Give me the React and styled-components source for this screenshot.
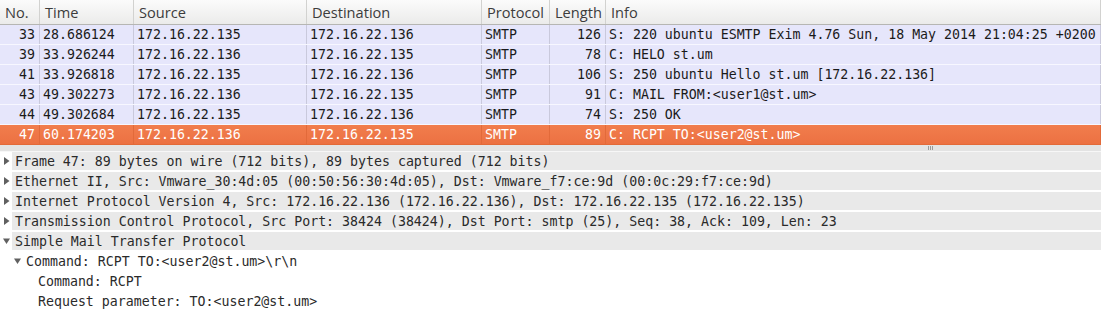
import React from 'react'
import styled, { createGlobalStyle } from 'styled-components'

const GlobalStyle = createGlobalStyle`
  html, body {
    margin: 0;
    padding: 0;
    background: #ffffff;
    overflow: hidden;
  }
`

const cols = '40px 94px 173px 175px 68px 56px 1fr'

const Window = styled.div`
  width: 1101px;
  height: 315px;
  display: flex;
  flex-direction: column;
  background: #ffffff;
`

const PacketList = styled.div`
  display: flex;
  flex-direction: column;
`

const HeaderRow = styled.div`
  display: grid;
  grid-template-columns: ${cols};
  height: 24px;
  background: linear-gradient(#fbfbfb, #ebebea);
  border-bottom: 1px solid #b6b6b3;
`

const HeaderCell = styled.div`
  display: flex;
  align-items: center;
  padding-left: 5px;
  font-family: 'Open Sans', 'DejaVu Sans', sans-serif;
  font-size: 14.6px;
  color: #3c3c3c;
  border-right: 1px solid #d2d2d0;
  white-space: nowrap;
  overflow: hidden;
`

const Row = styled.div`
  display: grid;
  grid-template-columns: ${cols};
  height: 19px;
  border-bottom: 1px solid ${p => (p.$selected ? '#e36a38' : '#f7f7ff')};
  background: ${p => (p.$selected ? 'linear-gradient(#f17d4d, #ec7142)' : '#e6e6fb')};
  color: ${p => (p.$selected ? '#ffffff' : '#1a1a1a')};
`

const Cell = styled.div`
  display: flex;
  align-items: center;
  justify-content: ${p => (p.$right ? 'flex-end' : 'flex-start')};
  padding: 0 4px 0 3px;
  font-family: 'DejaVu Sans Mono', monospace;
  font-size: 13.25px;
  white-space: pre;
  overflow: hidden;
  border-right: 1px solid ${p => (p.$selected ? '#e26a3a' : '#c9c9dc')};
`

const Splitter = styled.div`
  height: 6px;
  background: #e3e3e3;
  border-bottom: 1px solid #f7f7f7;
  display: flex;
  justify-content: flex-end;
  align-items: center;
  padding-right: 168px;
`

const Grip = styled.div`
  display: flex;
  gap: 1px;
  span {
    width: 1px;
    height: 4px;
    background: #9a9a9a;
  }
`

const Details = styled.div`
  display: flex;
  flex-direction: column;
`

const TreeRow = styled.div`
  display: flex;
  align-items: center;
  height: 18px;
  margin-bottom: 2px;
  padding-left: ${p => p.$indent}px;
`

const Expander = styled.div`
  width: 12px;
  flex: none;
  display: flex;
  align-items: center;
  justify-content: center;
`

const TreeText = styled.div`
  flex: 1;
  height: 100%;
  display: flex;
  align-items: center;
  padding-left: 3px;
  background: ${p => (p.$shaded ? '#e9e9e9' : 'transparent')};
  font-family: 'DejaVu Sans Mono', monospace;
  font-size: 13.25px;
  color: #2a2a2a;
  white-space: pre;
`

const Arrow = ({ open }) => (
  <svg width="7" height="8" viewBox="0 0 7 8">
    {open ? <path d="M0 1.5 L7 1.5 L3.5 7 Z" fill="#606060" /> : <path d="M1 0 L6.5 4 L1 8 Z" fill="#606060" />}
  </svg>
)

const packets = [
  ['33', '28.686124', '172.16.22.135', '172.16.22.136', 'SMTP', '126', 'S: 220 ubuntu ESMTP Exim 4.76 Sun, 18 May 2014 21:04:25 +0200'],
  ['39', '33.926244', '172.16.22.136', '172.16.22.135', 'SMTP', '78', 'C: HELO st.um'],
  ['41', '33.926818', '172.16.22.135', '172.16.22.136', 'SMTP', '106', 'S: 250 ubuntu Hello st.um [172.16.22.136]'],
  ['43', '49.302273', '172.16.22.136', '172.16.22.135', 'SMTP', '91', 'C: MAIL FROM:<user1@st.um>'],
  ['44', '49.302684', '172.16.22.135', '172.16.22.136', 'SMTP', '74', 'S: 250 OK'],
  ['47', '60.174203', '172.16.22.136', '172.16.22.135', 'SMTP', '89', 'C: RCPT TO:<user2@st.um>'],
]

const tree = [
  { text: 'Frame 47: 89 bytes on wire (712 bits), 89 bytes captured (712 bits)', indent: 0, arrow: 'closed', shaded: true },
  { text: 'Ethernet II, Src: Vmware_30:4d:05 (00:50:56:30:4d:05), Dst: Vmware_f7:ce:9d (00:0c:29:f7:ce:9d)', indent: 0, arrow: 'closed', shaded: true },
  { text: 'Internet Protocol Version 4, Src: 172.16.22.136 (172.16.22.136), Dst: 172.16.22.135 (172.16.22.135)', indent: 0, arrow: 'closed', shaded: true },
  { text: 'Transmission Control Protocol, Src Port: 38424 (38424), Dst Port: smtp (25), Seq: 38, Ack: 109, Len: 23', indent: 0, arrow: 'closed', shaded: true },
  { text: 'Simple Mail Transfer Protocol', indent: 0, arrow: 'open', shaded: true },
  { text: 'Command: RCPT TO:<user2@st.um>\\r\\n', indent: 11, arrow: 'open' },
  { text: 'Command: RCPT', indent: 23 },
  { text: 'Request parameter: TO:<user2@st.um>', indent: 23 },
]

const headers = ['No.', 'Time', 'Source', 'Destination', 'Protocol', 'Length', 'Info']

export default function App() {
  return (
    <Window>
      <GlobalStyle />
      <PacketList>
        <HeaderRow>
          {headers.map(h => (
            <HeaderCell key={h}>{h}</HeaderCell>
          ))}
        </HeaderRow>
        {packets.map(p => {
          const sel = p[0] === '47'
          return (
            <Row key={p[0]} $selected={sel}>
              {p.map((v, i) => (
                <Cell key={i} $right={i === 0 || i === 5} $selected={sel}>
                  {v}
                </Cell>
              ))}
            </Row>
          )
        })}
      </PacketList>
      <Splitter>
        <Grip>
          <span />
          <span />
          <span />
        </Grip>
      </Splitter>
      <Details>
        {tree.map((t, i) => (
          <TreeRow key={i} $indent={t.indent}>
            <Expander>{t.arrow && <Arrow open={t.arrow === 'open'} />}</Expander>
            <TreeText $shaded={t.shaded}>{t.text}</TreeText>
          </TreeRow>
        ))}
      </Details>
    </Window>
  )
}
